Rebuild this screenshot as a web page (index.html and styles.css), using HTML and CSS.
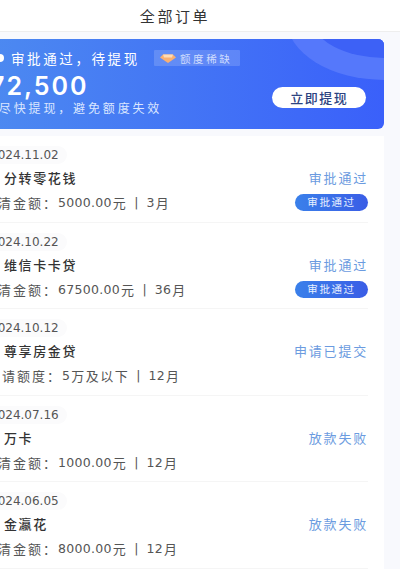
FILE: index.html
```html
<!DOCTYPE html>
<html lang="zh">
<head>
<meta charset="utf-8">
<title>全部订单</title>
<link rel="stylesheet" href="styles.css">
</head>
<body>
<div class="app">
  <header class="top"><h1>全部订单</h1></header>
  <main class="main">
    <section class="card">
      <div class="ring"></div>
      <div class="card-left">
        <div class="card-head">
          <span class="dot"></span>
          <span class="card-title">审批通过&#xFF0C;待提现</span>
          <span class="tag">
            <svg class="gem" viewBox="0 0 16 9"><path d="M3 0.5H13L16 3.5L8 9L0 3.5Z" fill="#f9b072"/><path d="M3 0.5H13L12 3.5H4Z" fill="#ffdcb5"/></svg>
            额度稀缺
          </span>
        </div>
        <div class="amount">72,500</div>
        <div class="hint">请尽快提现&#xFF0C;避免额度失效</div>
      </div>
      <button class="cta">立即提现</button>
    </section>
    <section class="list">
      <article class="item">
        <div class="date">2024.11.02</div>
        <div class="row"><span class="name">分转零花钱</span><span class="status">审批通过</span></div>
        <div class="row"><span class="info info-a"><span class="lab">结清金额&#xFF1A;</span><span class="val">5000.00</span><span class="unit">元</span><span class="sep">|</span><span class="val">3</span><span class="unit">月</span></span><span class="pill">审批通过</span></div>
      </article>
      <article class="item">
        <div class="date">2024.10.22</div>
        <div class="row"><span class="name">维信卡卡贷</span><span class="status">审批通过</span></div>
        <div class="row"><span class="info info-a"><span class="lab">结清金额&#xFF1A;</span><span class="val">67500.00</span><span class="unit">元</span><span class="sep">|</span><span class="val">36</span><span class="unit">月</span></span><span class="pill">审批通过</span></div>
      </article>
      <article class="item">
        <div class="date">2024.10.12</div>
        <div class="row"><span class="name">尊享房金贷</span><span class="status">申请已提交</span></div>
        <div class="row"><span class="info info-b"><span class="lab">申请额度&#xFF1A;</span><span class="val">5</span><span class="unit">万及以下</span><span class="sep">|</span><span class="val">12</span><span class="unit">月</span></span></div>
      </article>
      <article class="item">
        <div class="date">2024.07.16</div>
        <div class="row"><span class="name">万卡</span><span class="status">放款失败</span></div>
        <div class="row"><span class="info info-a"><span class="lab">结清金额&#xFF1A;</span><span class="val">1000.00</span><span class="unit">元</span><span class="sep">|</span><span class="val">12</span><span class="unit">月</span></span></div>
      </article>
      <article class="item">
        <div class="date">2024.06.05</div>
        <div class="row"><span class="name">金瀛花</span><span class="status">放款失败</span></div>
        <div class="row"><span class="info info-a"><span class="lab">结清金额&#xFF1A;</span><span class="val">8000.00</span><span class="unit">元</span><span class="sep">|</span><span class="val">12</span><span class="unit">月</span></span></div>
      </article>
    </section>
  </main>
</div>
</body>
</html>
```
FILE: styles.css
```css
* { box-sizing: border-box; }
html, body { margin: 0; padding: 0; }
body {
  width: 400px;
  height: 569px;
  overflow: hidden;
  font-family: "DejaVu Sans", "Noto Sans CJK SC", sans-serif;
  background: #f8f9fd;
}
.app { width: 400px; height: 569px; overflow: hidden; }
.top {
  height: 32px;
  background: #fff;
  border-bottom: 1px solid #eeeeee;
  display: flex;
  align-items: center;
  justify-content: center;
  padding-right: 50px;
}
.top h1 {
  margin: 0;
  font-size: 15px;
  font-weight: 400;
  letter-spacing: 2.6px;
  color: #333;
}
.main { margin-left: -24px; width: 408px; padding-top: 7px; }
.card {
  position: relative;
  overflow: hidden;
  height: 90px;
  border-radius: 6px;
  background: linear-gradient(90deg, #4d8bf0 0%, #3a60fa 100%);
  display: flex;
  justify-content: space-between;
  align-items: flex-end;
  padding: 0 18px 11px 20px;
  color: #fff;
}
.ring {
  position: absolute;
  left: 311px;
  top: -79px;
  width: 196px;
  height: 120px;
  border-radius: 50%;
  background: #5578fb;
}
.ring::after {
  content: "";
  position: absolute;
  left: 26px;
  top: 22px;
  width: 144px;
  height: 76px;
  border-radius: 50%;
  background: #3d61f6;
}
.card-left { position: relative; width: 280px; }
.card-head { display: flex; align-items: center; height: 16px; }
.dot { width: 8px; height: 8px; border-radius: 50%; background: #fff; margin: 0 7px 0 0; flex: none; }
.card-title { font-size: 13.5px; letter-spacing: 2.6px; width: 143px; flex: none; white-space: nowrap; }
.tag {
  display: flex;
  align-items: center;
  width: 86px;
  height: 16px;
  padding-left: 6px;
  background: rgba(255,255,255,.16);
  font-size: 10.5px;
  letter-spacing: 2.6px;
  color: #cfdcfd;
  white-space: nowrap;
  border-radius: 1px;
}
.gem { width: 16px; height: 9px; margin-right: 4px; flex: none; }
.amount { font-family: Inter, "DejaVu Sans", sans-serif; font-size: 25px; letter-spacing: 2px; line-height: 28px; margin: 6px 0 0 -6px; font-weight: 600; white-space: nowrap; }
.hint { font-size: 12px; letter-spacing: 2.85px; line-height: 18px; color: #dbe6ff; margin-left: -12px; white-space: nowrap; }
.cta {
  position: relative;
  width: 95px;
  height: 21px;
  padding: 0;
  margin-bottom: 10px;
  border: 0;
  border-radius: 11px;
  background: #fff;
  color: #2c4381;
  font-family: inherit;
  font-size: 13px;
  font-weight: 500;
  letter-spacing: 1.5px;
}
.list { margin-top: 7px; background: #fff; padding: 0 16px; height: 440px; }
.item { height: 86.5px; padding-top: 10px; border-bottom: 1px solid #f5f5f5; }
.date {
  font-size: 12px;
  line-height: 18px;
  color: #555;
  width: max-content;
  margin-left: -2px;
  padding-right: 8px;
  border-radius: 9px;
  background: #fbfbfc;
}
.row { display: flex; justify-content: space-between; align-items: center; height: 25px; }
.date + .row { margin-top: 1px; }
.name { font-size: 13px; font-weight: 500; color: #333; letter-spacing: 1.6px; margin-left: 12px; }
.status { font-size: 13px; letter-spacing: 1.8px; color: #6b9be0; }
.info { font-size: 12.5px; color: #555; white-space: nowrap; display: flex; align-items: center; }
.info-a { margin-left: -9px; }
.info-b { margin-left: -5px; }
.lab { font-size: 13px; letter-spacing: 2px; }
.val { letter-spacing: .3px; }
.unit { font-size: 13px; letter-spacing: 1.5px; margin-left: 1px; }
.sep { margin: 0 8px 0 7px; }
.pill {
  width: 73px;
  height: 17px;
  border-radius: 9px;
  background: linear-gradient(90deg, #3a80ea, #3a5de6);
  color: #e8f0ff;
  font-size: 10.5px;
  line-height: 17px;
  letter-spacing: 1.6px;
  text-align: center;
  white-space: nowrap;
}
```
